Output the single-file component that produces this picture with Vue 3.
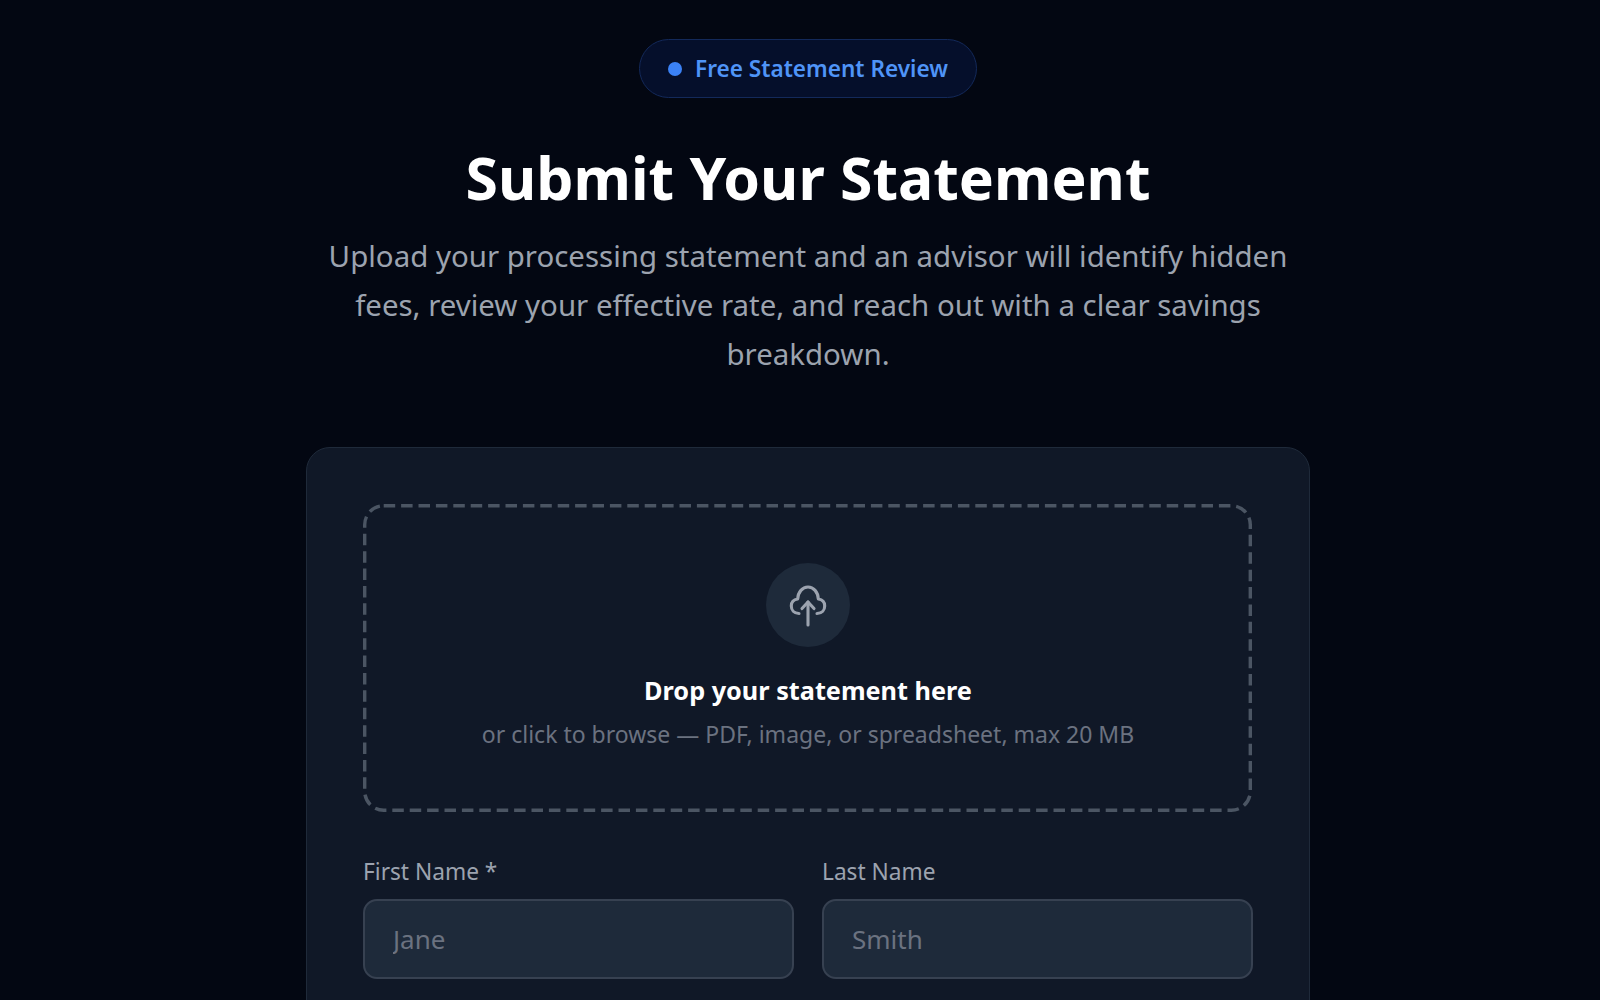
<script setup>
const fields = [
  { label: 'First Name *', placeholder: 'Jane' },
  { label: 'Last Name', placeholder: 'Smith' },
]
</script>

<template>
  <main class="page">
    <div class="badge"><span class="dot"></span>Free Statement Review</div>
    <h1 class="title">Submit Your Statement</h1>
    <p class="lead">Upload your processing statement and an advisor will identify hidden fees, review your effective rate, and reach out with a clear savings breakdown.</p>
    <section class="card">
      <div class="drop">
        <svg class="dash" width="889" height="308" viewBox="0 0 889 308" fill="none">
          <rect x="1.7" y="1.7" width="885.6" height="304.6" rx="19" stroke="#4b5563" stroke-width="3.4" stroke-dasharray="11.5 5.9" />
        </svg>
        <div class="icon">
          <svg width="48" height="48" viewBox="0 0 48 48" fill="none" stroke="currentColor" stroke-width="3.1" stroke-linecap="round" stroke-linejoin="round">
            <path d="M24 44V21" />
            <path d="M18 27.5 24 21l6 6.5" />
            <path d="M15 32.5C10 32.5 7.3 29 7.3 25 7.3 21 10 18.5 13.7 18 14 11 18.5 6 24 6 29.5 6 34 11 34.3 18 38 18.5 40.7 21 40.7 25 40.7 29 38 32.5 33 32.5" />
          </svg>
        </div>
        <div class="drop-title">Drop your statement here</div>
        <div class="drop-sub">or click to browse — PDF, image, or spreadsheet, max 20 MB</div>
      </div>
      <div class="row">
        <label v-for="f in fields" :key="f.label" class="field">
          <span class="label">{{ f.label }}</span>
          <input class="input" type="text" :placeholder="f.placeholder" />
        </label>
      </div>
    </section>
  </main>
</template>

<style>
html, body { margin: 0; background: #030712; overflow: hidden; }
</style>

<style scoped>
.page {
  box-sizing: border-box;
  height: 1000px;
  overflow: hidden;
  padding: 39px 0 0 16px;
  display: flex;
  flex-direction: column;
  align-items: center;
  background: #030712;
  font-family: "Noto Sans", "Open Sans", sans-serif;
}
.page > * { flex-shrink: 0; }
.badge {
  box-sizing: border-box;
  width: 338px;
  height: 59px;
  display: flex;
  align-items: center;
  justify-content: center;
  gap: 13px;
  border: 1px solid #13295a;
  border-radius: 30px;
  background: #050f2b;
  color: #4f94f7;
  font-size: 22.6px;
  font-weight: 600;
}
.dot { width: 14px; height: 14px; border-radius: 50%; background: #3b82f6; }
.title {
  margin: 44px 0 0;
  font-size: 58.9px;
  line-height: 70px;
  font-weight: 700;
  color: #fff;
}
.lead {
  margin: 20px 0 0;
  width: 980px;
  text-align: center;
  font-size: 29.45px;
  line-height: 49px;
  color: #9ca3af;
}
.card {
  box-sizing: border-box;
  width: 1004px;
  margin-top: 68px;
  padding: 56px;
  border: 1px solid #1f2a3a;
  border-radius: 24px;
  background: #101827;
}
.drop {
  position: relative;
  box-sizing: border-box;
  height: 308px;
  display: flex;
  flex-direction: column;
  align-items: center;
  padding-top: 59px;
}
.dash { position: absolute; left: 0; top: 0; }
.icon {
  width: 84px;
  height: 84px;
  display: flex;
  align-items: center;
  justify-content: center;
  border-radius: 50%;
  background: #1e2a3a;
  color: #9ca3af;
}
.drop-title { margin-top: 26px; font-size: 25.25px; line-height: 34px; font-weight: 700; color: #fff; }
.drop-sub { margin-top: 10px; font-size: 23px; line-height: 34px; color: #6b7280; }
.row {
  margin-top: 44px;
  display: grid;
  grid-template-columns: 1fr 1fr;
  gap: 28px;
}
.field { display: flex; flex-direction: column; gap: 11px; }
.label { font-size: 22.7px; line-height: 32px; color: #9ca3af; }
.input {
  box-sizing: border-box;
  width: 100%;
  height: 80px;
  padding: 0 28px;
  border: 2px solid #374151;
  border-radius: 14px;
  background: #1e2a3a;
  color: #fff;
  font: inherit;
  font-size: 26px;
  outline: none;
}
.input::placeholder { color: #6b7280; opacity: 1; }
</style>
